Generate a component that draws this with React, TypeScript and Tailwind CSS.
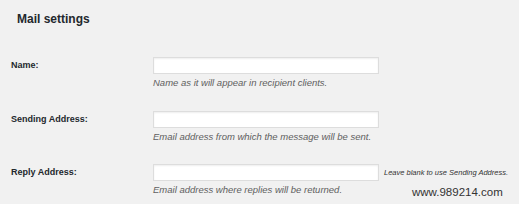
import React from "react";

const rows = [
  { label: "Name:", desc: "Name as it will appear in recipient clients.", note: "" },
  { label: "Sending Address:", desc: "Email address from which the message will be sent.", note: "" },
  { label: "Reply Address:", desc: "Email address where replies will be returned.", note: "Leave blank to use Sending Address." },
];

export default function App() {
  return (
    <div
      className="relative w-[519px] h-[204px] bg-[#f1f1f1] overflow-hidden text-[#23282d]"
      style={{ fontFamily: '"Liberation Sans", Arial, sans-serif' }}
    >
      <h2 className="pl-[17px] pt-[12px] text-[12px] leading-[14px] font-bold">Mail settings</h2>
      <div className="pl-[11px] pt-[31px] flex flex-col">
        {rows.map((r, i) => (
          <div key={i} className={"flex " + (i === 0 ? "h-[54px]" : "h-[53px]")}>
            <div className="w-[142px] h-[17px] flex items-center text-[9px] font-bold leading-[17px]">{r.label}</div>
            <div className="flex flex-col">
              <div className="flex items-center">
                <div className="w-[226px] h-[17px] bg-white border border-[#dddddd] shadow-[inset_0_1px_2px_rgba(0,0,0,0.07)]" />
                {r.note && (
                  <span className="ml-[5px] text-[7.5px] italic text-[#333]">{r.note}</span>
                )}
              </div>
              <div className="mt-[3px] text-[9.5px] leading-[12px] italic text-[#606060]">{r.desc}</div>
            </div>
          </div>
        ))}
      </div>
      <div className="absolute left-[412px] top-[186px] text-[11.5px] leading-[12px] text-[#333]">www.989214.com</div>
    </div>
  );
}
